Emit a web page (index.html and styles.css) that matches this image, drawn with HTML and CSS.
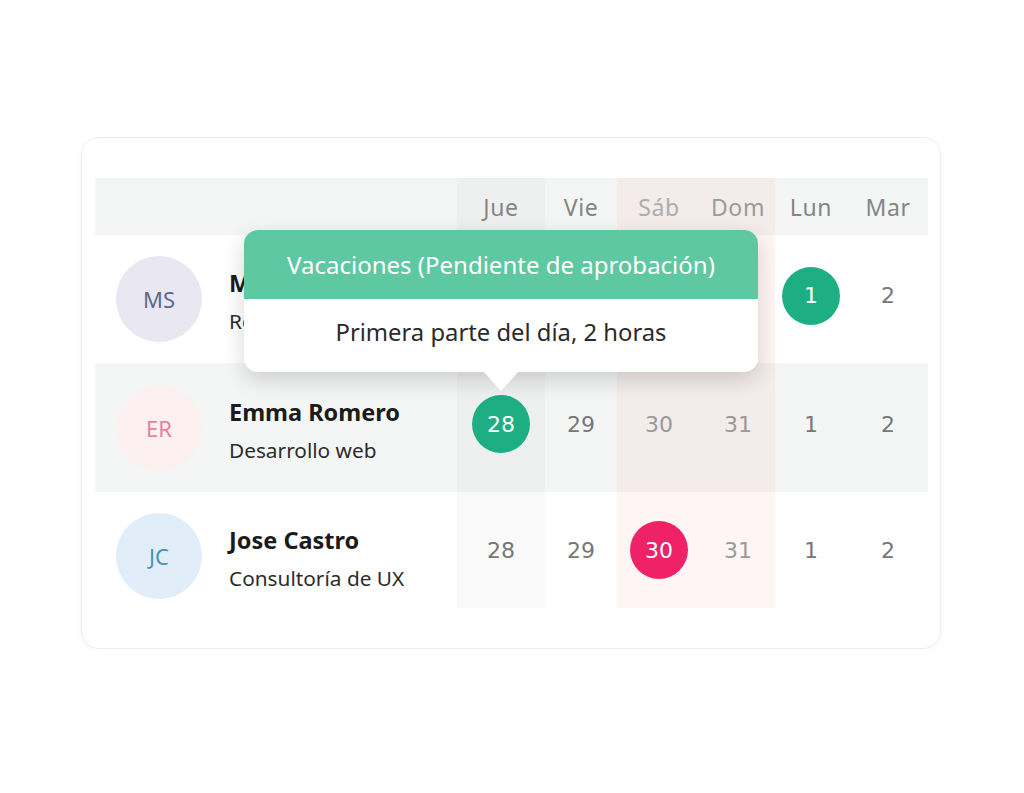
FILE: index.html
```html
<!DOCTYPE html>
<html lang="es">
<head>
  <meta charset="UTF-8">
  <title>Calendario de ausencias</title>
  <meta name="viewport" content="width=device-width, initial-scale=1.0">
  <link rel="stylesheet" href="styles.css">
</head>
<body>
  <div class="tarjeta">
    <div class="tabla">
      <div class="fila cabecera">
        <div class="persona"></div>
        <div class="dia hoy">Jue</div>
        <div class="dia">Vie</div>
        <div class="dia finde claro">Sáb</div>
        <div class="dia finde">Dom</div>
        <div class="dia">Lun</div>
        <div class="dia">Mar</div>
      </div>

      <div class="fila">
        <div class="persona">
          <div class="avatar ms">MS</div>
          <div class="datos">
            <strong>Marta Sánchez</strong>
            <span>Recursos humanos</span>
          </div>
        </div>
        <div class="dia hoy">28</div>
        <div class="dia">29</div>
        <div class="dia finde">30</div>
        <div class="dia finde">31</div>
        <div class="dia"><span class="marca verde">1</span></div>
        <div class="dia">2</div>
      </div>

      <div class="fila gris">
        <div class="persona">
          <div class="avatar er">ER</div>
          <div class="datos">
            <strong>Emma Romero</strong>
            <span>Desarrollo web</span>
          </div>
        </div>
        <div class="dia hoy"><span class="marca verde">28</span></div>
        <div class="dia">29</div>
        <div class="dia finde">30</div>
        <div class="dia finde">31</div>
        <div class="dia">1</div>
        <div class="dia">2</div>
      </div>

      <div class="fila ultima">
        <div class="persona">
          <div class="avatar jc">JC</div>
          <div class="datos">
            <strong>Jose Castro</strong>
            <span>Consultoría de UX</span>
          </div>
        </div>
        <div class="dia hoy">28</div>
        <div class="dia">29</div>
        <div class="dia finde"><span class="marca rosa">30</span></div>
        <div class="dia finde">31</div>
        <div class="dia">1</div>
        <div class="dia">2</div>
      </div>

      <div class="globo">
        <div class="globo-titulo">Vacaciones (Pendiente de aprobación)</div>
        <div class="globo-texto">Primera parte del día, 2 horas</div>
      </div>
    </div>
  </div>
</body>
</html>
```

FILE: styles.css
```css
body {
  margin: 0;
  background: white;
  font-family: 'Noto Sans', sans-serif;
}
.tarjeta {
  width: 833px;
  margin: 137px 0 0 81px;
  padding: 40px 12px 40px 13px;
  border: 1px solid #ececec;
  border-radius: 18px;
  box-shadow: 0 2px 6px rgba(0,0,0,0.03);
}
.tabla {
  position: relative;
}
.fila {
  display: grid;
  grid-template-columns: 362px 88px 72px 84px 74px 72px 82px;
  height: 128px;
}
.fila.cabecera {
  height: 57px;
  background: #f4f6f5;
}
.fila.gris {
  height: 129px;
  background: #f4f6f5;
}
.fila.ultima {
  height: 116px;
}
.persona {
  display: flex;
  align-items: center;
  gap: 27px;
  padding-left: 21px;
}
.fila.ultima .persona {
  padding-top: 12px;
}
.avatar {
  width: 86px;
  height: 86px;
  border-radius: 50%;
  display: flex;
  justify-content: center;
  align-items: center;
  font-size: 22px;
  flex-shrink: 0;
}
.avatar.ms { background: #e9e7f1; color: #5b6b8c; }
.avatar.er { background: #fcf0f1; color: #e8829d; }
.avatar.jc { background: #e1eef9; color: #4b93ab; }
.datos {
  display: flex;
  flex-direction: column;
  gap: 8px;
  margin-top: 4px;
}
.datos strong {
  font-size: 23.5px;
  color: #1b1b1b;
}
.datos span {
  font-size: 20.8px;
  color: #2c2c2c;
}
.dia {
  display: flex;
  justify-content: center;
  align-items: center;
  padding-bottom: 7px;
  font-family: 'DejaVu Sans', sans-serif;
  font-size: 22px;
  color: #777;
}
.fila.ultima .dia {
  padding-bottom: 0;
}
.cabecera .dia {
  padding-bottom: 0;
  font-family: 'Noto Sans', sans-serif;
  font-size: 23px;
  letter-spacing: 0.6px;
  color: #858585;
}
.dia.hoy {
  background: rgba(0,0,0,0.025);
}
.dia.finde {
  background: rgba(245,90,70,0.06);
  color: #999;
}
.cabecera .dia.finde { color: #9a9a9a; }
.cabecera .dia.claro { color: #adadad; }
.marca {
  width: 58px;
  height: 58px;
  border-radius: 50%;
  display: flex;
  justify-content: center;
  align-items: center;
  color: white;
}
.marca.verde { background: #1dae83; }
.marca.rosa { background: #ef2167; }
.globo {
  position: absolute;
  left: 149px;
  top: 52px;
  width: 514px;
  background: white;
  border-radius: 14px;
  box-shadow: 0 8px 22px rgba(0,0,0,0.16);
}
.globo::after {
  content: '';
  position: absolute;
  left: 239px;
  bottom: -19px;
  border-left: 18px solid transparent;
  border-right: 18px solid transparent;
  border-top: 20px solid white;
}
.globo-titulo {
  background: #5ec8a2;
  color: white;
  font-size: 24px;
  text-align: center;
  height: 69px;
  line-height: 69px;
  border-radius: 14px 14px 0 0;
}
.globo-texto {
  font-size: 23.8px;
  color: #2a2a2a;
  text-align: center;
  height: 73px;
  line-height: 66px;
}
```
